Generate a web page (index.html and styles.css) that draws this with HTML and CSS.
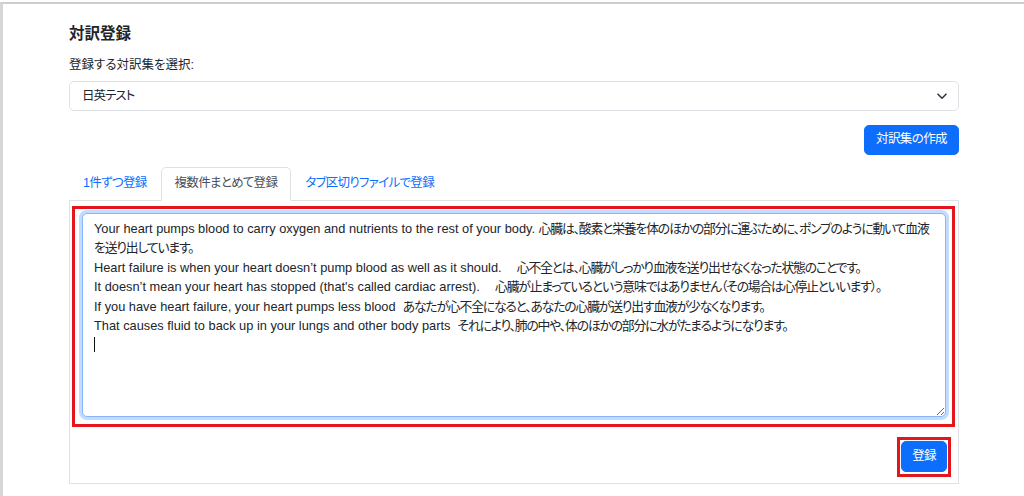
FILE: index.html
```html
<!DOCTYPE html>
<html lang="ja">
<head>
<meta charset="utf-8">
<title>対訳登録</title>
<link rel="stylesheet" href="styles.css">
</head>
<body>
<div class="frame">
  <main class="container">
    <h1 class="title">対訳登録</h1>
    <label class="label" for="corpus">登録する対訳集を選択:</label>
    <div class="select-box">
      <select id="corpus" class="select">
        <option>日英テスト</option>
      </select>
      <svg class="chev" width="10" height="7" viewBox="0 0 10 7" aria-hidden="true"><path d="M1 1.2 L5 5.2 L9 1.2" fill="none" stroke="#343a40" stroke-width="1.6" stroke-linecap="round" stroke-linejoin="round"/></svg>
    </div>
    <div class="toolbar">
      <button class="btn" type="button">対訳集の作成</button>
    </div>
    <nav class="tabs">
      <a class="tab" href="#">1件ずつ登録</a>
      <a class="tab active" href="#">複数件まとめて登録</a>
      <a class="tab" href="#">タブ区切りファイルで登録</a>
    </nav>
    <section class="panel">
      <div class="annot annot-area">
        <div class="textarea" role="textbox" aria-multiline="true">Your heart pumps blood to carry oxygen and nutrients to the rest of your body. <span class="ja">心臓は、酸素と栄養を体のほかの部分に運ぶために、ポンプのように動いて血液を送り出しています。</span>
Heart failure is when your heart doesn’t pump blood as well as it should. <span class="ja">　心不全とは、心臓がしっかり血液を送り出せなくなった状態のことです。</span>
It doesn’t mean your heart has stopped (that's called cardiac arrest). <span class="ja">　心臓が止まっているという意味ではありません（その場合は心停止といいます）。</span>
If you have heart failure, your heart pumps less blood  <span class="ja">あなたが心不全になると、あなたの心臓が送り出す血液が少なくなります。</span>
That causes fluid to back up in your lungs and other body parts  <span class="ja">それにより、肺の中や、体のほかの部分に水がたまるようになります。</span>
<span class="caret"></span></div>
      </div>
      <div class="actions">
        <div class="annot annot-btn">
          <button class="btn btn-submit" type="button">登録</button>
        </div>
      </div>
    </section>
  </main>
</div>
</body>
</html>
```
FILE: styles.css
```css
* { box-sizing: border-box; }

html, body {
  margin: 0;
  padding: 0;
  background: #fff;
}

body {
  padding-top: 2px;
  font-family: "Liberation Sans", "Noto Sans CJK JP", sans-serif;
  font-feature-settings: "palt";
  font-size: 12.5px;
  line-height: 19.4px;
  color: #212529;
}

.frame {
  border-top: 2px solid #cdcdcd;
  border-left: 3px solid #d6d6d6;
  min-height: 494px;
}

.container {
  width: 890px;
  margin: 0 0 0 66px;
  padding-top: 21px;
}

.title {
  margin: 0 0 12px;
  font-size: 15.5px;
  line-height: 18.6px;
  font-weight: 700;
}

.label {
  display: block;
  margin-bottom: 6px;
}

.select-box {
  position: relative;
}

.select {
  display: block;
  width: 100%;
  height: 30px;
  padding: 2px 30px 0 12px;
  border: 1px solid #dee2e6;
  border-radius: 5px;
  background: #fff;
  font: inherit;
  letter-spacing: -1px;
  color: #212529;
  appearance: none;
  -webkit-appearance: none;
  outline: none;
}

.chev {
  position: absolute;
  right: 12px;
  top: 12px;
  pointer-events: none;
}

.toolbar {
  display: flex;
  justify-content: flex-end;
  margin-top: 14px;
}

.btn {
  display: inline-block;
  padding: 4.3px 11px;
  border: 1px solid #0d6efd;
  border-radius: 5px;
  background: #0d6efd;
  color: #fff;
  font: inherit;
  letter-spacing: -0.6px;
  cursor: pointer;
}

.btn-submit {
  display: block;
  padding: 4.8px 10px;
}

.tabs {
  display: flex;
  margin-top: 12px;
  border-bottom: 1px solid #dee2e6;
}

.tab {
  display: block;
  margin-bottom: -1px;
  padding: 6.3px 13px;
  border: 1px solid transparent;
  border-radius: 5px 5px 0 0;
  color: #0d6efd;
  text-decoration: none;
  letter-spacing: -0.7px;
}

.tab.active {
  color: #495057;
  background: #fff;
  border-color: #dee2e6 #dee2e6 #fff;
}

.panel {
  border: 1px solid #dee2e6;
  border-top: 0;
  padding: 5px 3px 6px 2px;
}

.annot {
  border: 3px solid #e3161d;
}

.annot-area {
  padding: 4px 6px 7px 7px;
}

.textarea {
  display: block;
  width: 100%;
  height: 204px;
  padding: 5px 8px 5px 11px;
  border: 1px solid #86b7fe;
  border-radius: 5px;
  box-shadow: 0 0 0 3px rgba(13, 110, 253, 0.25);
  font-size: 12.8px;
  line-height: 19.4px;
  color: #212529;
  background: #fff;
  white-space: pre-wrap;
  overflow: auto;
  resize: vertical;
}

.ja {
  letter-spacing: -1.15px;
}

.caret {
  display: inline-block;
  width: 1px;
  height: 15px;
  vertical-align: -3px;
  background: #111;
}

.actions {
  display: flex;
  justify-content: flex-end;
  margin-top: 10px;
  padding-right: 4px;
}

.annot-btn {
  padding: 1px 1px 2px;
}
```
